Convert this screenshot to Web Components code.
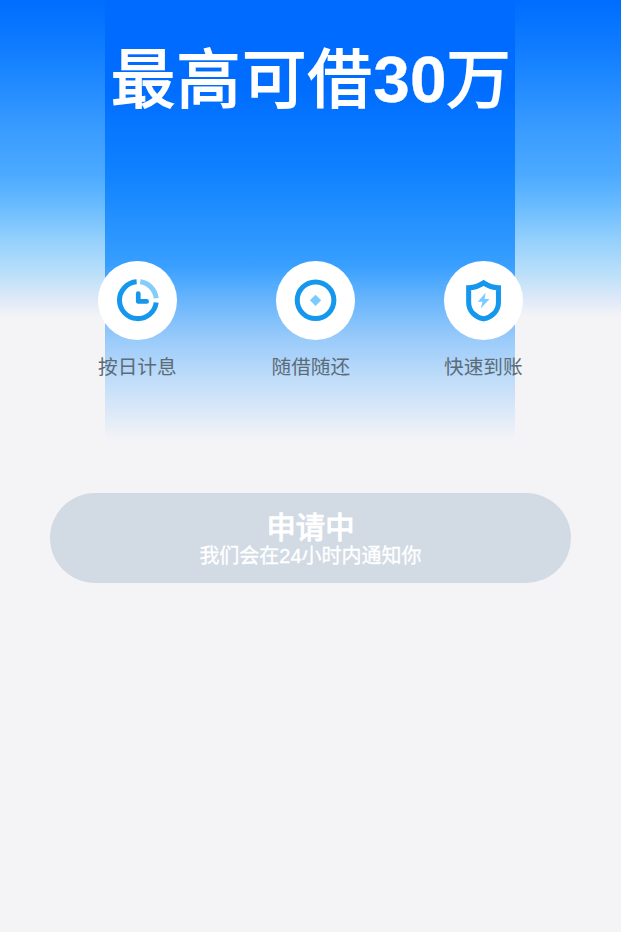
<!DOCTYPE html>
<html lang="zh-CN">
<head>
<meta charset="utf-8">
<meta name="viewport" content="width=device-width">
<title>最高可借30万</title>
<style>
  body {
    background: #f4f4f7;
    font-family: "Liberation Sans", "Noto Sans CJK SC", sans-serif;
    margin: 0;
  }
</style>
</head>
<body>

<loan-page>
  <loan-title slot="title">最高可借<b>30</b>万</loan-title>

  <loan-feature slot="features" label="按日计息">
    <svg viewBox="0 0 78 78" fill="none">
      <path d="M38.4 20.7A18.3 18.3 0 1 0 57.8 41.2" stroke="#1597ee" stroke-width="5"/>
      <path d="M42 20.7A18.3 18.3 0 0 1 57.8 37" stroke="#84cdfb" stroke-width="5"/>
      <path d="M40 32.4V40.2H48.3" stroke="#1597ee" stroke-width="4.7" stroke-linecap="round" stroke-linejoin="round"/>
    </svg>
  </loan-feature>

  <loan-feature slot="features" label="随借随还" style="--icon-shift: 4.5px">
    <svg viewBox="0 0 78 78" fill="none">
      <circle cx="39.3" cy="39" r="18.2" stroke="#1597ee" stroke-width="5"/>
      <path d="M39.3 33.5L44.9 39.1L39.3 44.7L33.7 39.1Z" fill="#7bcbff"/>
    </svg>
  </loan-feature>

  <loan-feature slot="features" label="快速到账">
    <svg viewBox="0 0 78 78" fill="none">
      <path d="M39.3 21.7C43.5 24.6 48.2 26.4 54.1 26.5V41.2C54.1 49.7 47.8 55.6 39.3 57.5C30.8 55.6 24.5 49.7 24.5 41.2V26.5C30.4 26.4 35.1 24.6 39.3 21.7Z" stroke="#1597ee" stroke-width="5"/>
      <path d="M41.3 31.6L33.6 40.4H38.3L36.4 47.2L45.3 37.7H40.3Z" fill="#7bcbff"/>
    </svg>
  </loan-feature>

  <apply-button slot="action" label="申请中">我们会在24小时内通知你</apply-button>
</loan-page>

<script>
class LoanPage extends HTMLElement {

  constructor() {
    super();
    this.attachShadow({ mode: 'open' });
    this.shadowRoot.innerHTML = /* html */`
<slot name="title"></slot>
<div class="features">
  <slot name="features"></slot>
</div>
<slot name="action"></slot>

<style>
  :host {
    /* centre banner over the full-width sky */
    background:
      linear-gradient(#006bff 0, #006dff 90px, #0878ff 130px, #0d80ff 165px, #228fff 215px, #389fff 265px, #68b5fc 300px, #9acbfa 340px, #bcdbf9 375px, #dae8f8 410px, #f4f4f7 440px) 105px 0 / 410px 440px no-repeat,
      linear-gradient(#006dff 0, #0775ff 25px, #1783ff 65px, #379aff 125px, #4caaff 175px, #68bbff 205px, #94d0fc 240px, #bce0f9 275px, #dfe9f8 300px, #f4f4f7 317px) 0 0 / 100% 318px no-repeat,
      #f4f4f7;
    box-sizing: border-box;
    display: flex;
    flex-direction: column;
    height: 932px;
    padding: 40px 50px 0;
    width: 621px;
  }

  .features {
    display: flex;
    justify-content: space-between;
    margin: 141px 48px 110.5px;
  }
</style>
`;
  }

}

class LoanTitle extends HTMLElement {

  constructor() {
    super();
    this.attachShadow({ mode: 'open' });
    this.shadowRoot.innerHTML = /* html */`
<h1><slot></slot></h1>

<style>
  :host {
    display: block;
  }

  h1 {
    color: white;
    font-size: 64px;
    font-weight: normal;
    letter-spacing: 1.6px;
    line-height: 80px;
    margin: 0;
    padding-left: 2px;
    text-align: center;
    white-space: nowrap;
    -webkit-text-stroke: 1.8px white;
  }

  ::slotted(b) {
    font-size: 65.7px;
    letter-spacing: 0;
    -webkit-text-stroke: 0.3px white;
  }
</style>
`;
  }

}

class LoanFeature extends HTMLElement {

  constructor() {
    super();
    this.attachShadow({ mode: 'open' });
    this.shadowRoot.innerHTML = /* html */`
<div class="icon"><slot></slot></div>
<span id="label"></span>

<style>
  :host {
    display: flex;
    flex-direction: column;
    gap: 12.5px;
    width: 79px;
  }

  :host(:nth-of-type(2)) {
    margin-left: 1px;
  }

  .icon {
    background: white;
    border-radius: 50%;
    height: 78.5px;
    margin-left: var(--icon-shift, 0);
    width: 78.5px;
  }

  ::slotted(svg) {
    display: block;
    height: 100%;
    width: 100%;
  }

  span {
    color: #5c6b78;
    font-size: 19.7px;
    line-height: 30px;
    white-space: nowrap;
  }
</style>
`;
  }

  connectedCallback() {
    this.shadowRoot.getElementById('label').textContent = this.getAttribute('label');
  }

}

class ApplyButton extends HTMLElement {

  constructor() {
    super();
    this.attachShadow({ mode: 'open' });
    this.shadowRoot.innerHTML = /* html */`
<button disabled>
  <strong id="label"></strong>
  <span><slot></slot></span>
</button>

<style>
  :host {
    display: block;
  }

  button {
    align-items: center;
    background: #d2dae4;
    border: 0;
    border-radius: 46px;
    color: white;
    display: flex;
    flex-direction: column;
    font-family: inherit;
    height: 90.5px;
    justify-content: center;
    padding: 7px 0 0;
    width: 100%;
  }

  strong {
    font-size: 29.3px;
    font-weight: normal;
    line-height: 31px;
    -webkit-text-stroke: 1.1px white;
  }

  span {
    font-size: 20px;
    line-height: 27px;
    -webkit-text-stroke: 0.35px white;
  }
</style>
`;
  }

  connectedCallback() {
    this.shadowRoot.getElementById('label').textContent = this.getAttribute('label');
  }

}

customElements.define('loan-page', LoanPage);
customElements.define('loan-title', LoanTitle);
customElements.define('loan-feature', LoanFeature);
customElements.define('apply-button', ApplyButton);
</script>
</body>
</html>
